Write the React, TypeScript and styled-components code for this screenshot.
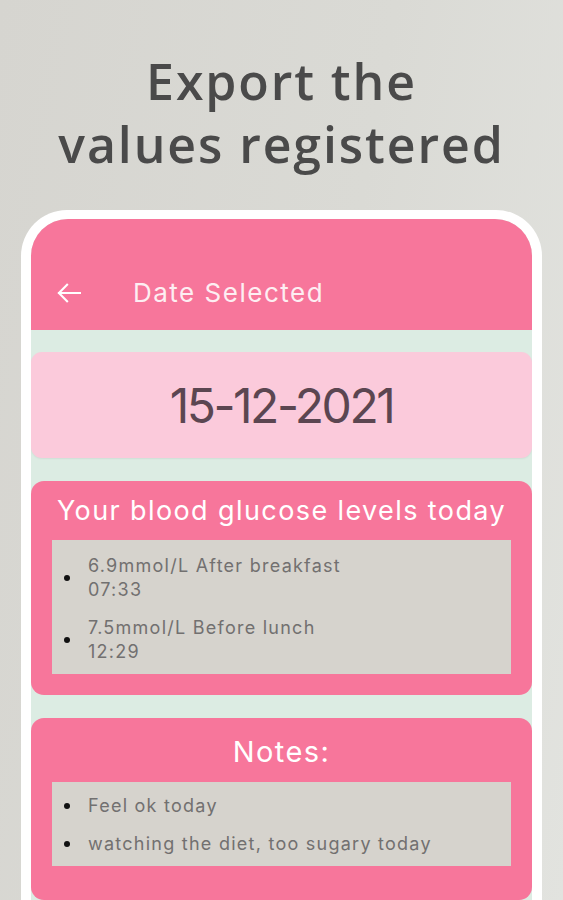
import React from "react";
import styled, { createGlobalStyle } from "styled-components";

const GlobalStyle = createGlobalStyle`
  html, body { margin: 0; padding: 0; }
  body { background: #d9d8d3; }
  * { box-sizing: border-box; }
`;

const Page = styled.div`
  position: relative;
  width: 563px;
  height: 900px;
  overflow: hidden;
  display: flex;
  flex-direction: column;
  align-items: center;
  background: linear-gradient(100deg, #d6d5d0 0%, #dadad5 55%, #e2e3df 100%);
`;

const Headline = styled.h1`
  margin: 50px 0 0;
  font-family: "Open Sans", "Lato", sans-serif;
  font-weight: 600;
  font-size: 50px;
  line-height: 63px;
  letter-spacing: 1.9px;
  color: #4a4a4a;
  text-align: center;
`;

const Phone = styled.div`
  margin-top: 34px;
  width: 521px;
  flex: 1;
  background: #ffffff;
  border-radius: 46px 46px 0 0;
  padding: 9px 10px 0;
`;

const Screen = styled.div`
  height: 100%;
  border-radius: 37px 37px 0 0;
  overflow: hidden;
  background: #dcece3;
  font-family: "Inter", "Noto Sans", sans-serif;
`;

const AppBar = styled.div`
  height: 111px;
  padding-top: 36px;
  background: #f7769b;
`;

const Toolbar = styled.div`
  height: 75px;
  display: flex;
  align-items: center;
  padding-left: 26px;
  gap: 52px;
`;

const BackButton = styled.button`
  border: 0;
  background: none;
  padding: 0;
  width: 24px;
  height: 24px;
  display: flex;
  align-items: center;
  justify-content: center;
`;

const BarTitle = styled.div`
  font-size: 26px;
  font-weight: 400;
  letter-spacing: 1.5px;
  color: #fdeef2;
`;

const Content = styled.div`
  display: flex;
  flex-direction: column;
  gap: 23px;
  padding: 22px 0 0;
`;

const DateCard = styled.div`
  height: 106px;
  border-radius: 11px;
  background: #fbcadb;
  display: flex;
  align-items: center;
  justify-content: center;
  font-size: 48px;
  letter-spacing: -2.5px;
  color: #5b4651;
  box-shadow: 0 1px 2px rgba(0, 0, 0, 0.06);
`;

const Card = styled.div<{ $pt: number; $pb: number }>`
  border-radius: 13px;
  background: #f7769b;
  padding: ${(p) => p.$pt}px 21px ${(p) => p.$pb}px;
`;

const CardTitle = styled.div<{ $size: number; $mb: number }>`
  font-size: ${(p) => p.$size}px;
  line-height: 36px;
  letter-spacing: 1.4px;
  color: #ffffff;
  text-align: center;
  margin-bottom: ${(p) => p.$mb}px;
`;

const ListBox = styled.div<{ $pt: number }>`
  background: #d6d3cd;
  padding: ${(p) => p.$pt}px 0 10px 12px;
  display: flex;
  flex-direction: column;
  gap: 14px;
`;

const Item = styled.div`
  display: flex;
  align-items: center;
  gap: 18px;
`;

const Dot = styled.span`
  width: 6px;
  height: 6px;
  border-radius: 50%;
  background: #111;
  flex: none;
`;

const ItemText = styled.div`
  font-size: 18px;
  line-height: 24px;
  letter-spacing: 1.25px;
  color: #727070;
`;

const BackArrow = () => (
  <svg width="25" height="22" viewBox="0 0 25 22" fill="none">
    <path d="M24 11H2M10.5 2.5L2 11l8.5 8.5" stroke="#ffffff" strokeWidth="2.2" strokeLinecap="square" />
  </svg>
);

const readings = [
  { value: "6.9mmol/L After breakfast", time: "07:33" },
  { value: "7.5mmol/L Before lunch", time: "12:29" },
];

const notes = ["Feel ok today", "watching the diet, too sugary today"];

export default function App() {
  return (
    <>
      <GlobalStyle />
      <Page>
        <Headline>
          Export the
          <br />
          values registered
        </Headline>
        <Phone>
          <Screen>
            <AppBar>
              <Toolbar>
                <BackButton aria-label="Back">
                  <BackArrow />
                </BackButton>
                <BarTitle>Date Selected</BarTitle>
              </Toolbar>
            </AppBar>
            <Content>
              <DateCard>15-12-2021</DateCard>
              <Card $pt={12} $pb={21}>
                <CardTitle $size={27} $mb={11}>
                  Your blood glucose levels today
                </CardTitle>
                <ListBox $pt={14}>
                  {readings.map((r) => (
                    <Item key={r.time}>
                      <Dot />
                      <ItemText>
                        {r.value}
                        <br />
                        {r.time}
                      </ItemText>
                    </Item>
                  ))}
                </ListBox>
              </Card>
              <Card $pt={16} $pb={34}>
                <CardTitle $size={29} $mb={12}>
                  Notes:
                </CardTitle>
                <ListBox $pt={12}>
                  {notes.map((n) => (
                    <Item key={n}>
                      <Dot />
                      <ItemText>{n}</ItemText>
                    </Item>
                  ))}
                </ListBox>
              </Card>
            </Content>
          </Screen>
        </Phone>
      </Page>
    </>
  );
}
